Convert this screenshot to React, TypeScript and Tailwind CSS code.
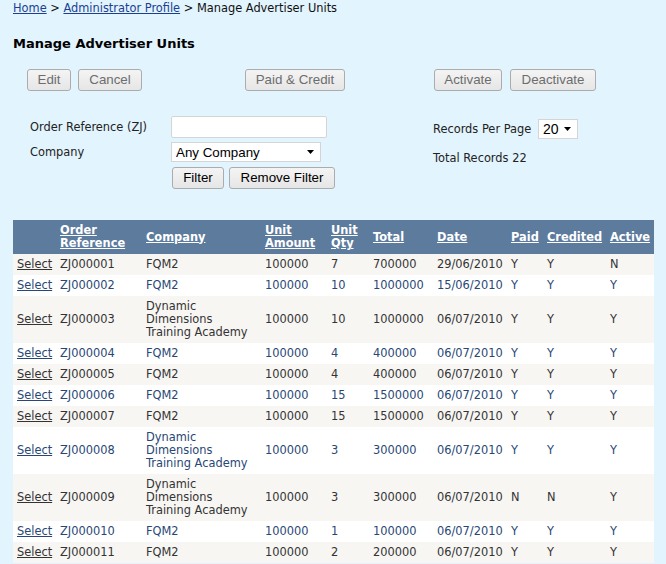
import React from 'react';

type Unit = {
  ref: string,
  company: string,
  amount: string,
  qty: string,
  total: string,
  date: string,
  paid: string,
  credited: string,
  active: string,
};

const DDTA = 'Dynamic Dimensions Training Academy';

const UNITS: Unit[] = [
  { ref: 'ZJ000001', company: 'FQM2', amount: '100000', qty: '7', total: '700000', date: '29/06/2010', paid: 'Y', credited: 'Y', active: 'N' },
  { ref: 'ZJ000002', company: 'FQM2', amount: '100000', qty: '10', total: '1000000', date: '15/06/2010', paid: 'Y', credited: 'Y', active: 'Y' },
  { ref: 'ZJ000003', company: DDTA, amount: '100000', qty: '10', total: '1000000', date: '06/07/2010', paid: 'Y', credited: 'Y', active: 'Y' },
  { ref: 'ZJ000004', company: 'FQM2', amount: '100000', qty: '4', total: '400000', date: '06/07/2010', paid: 'Y', credited: 'Y', active: 'Y' },
  { ref: 'ZJ000005', company: 'FQM2', amount: '100000', qty: '4', total: '400000', date: '06/07/2010', paid: 'Y', credited: 'Y', active: 'Y' },
  { ref: 'ZJ000006', company: 'FQM2', amount: '100000', qty: '15', total: '1500000', date: '06/07/2010', paid: 'Y', credited: 'Y', active: 'Y' },
  { ref: 'ZJ000007', company: 'FQM2', amount: '100000', qty: '15', total: '1500000', date: '06/07/2010', paid: 'Y', credited: 'Y', active: 'Y' },
  { ref: 'ZJ000008', company: DDTA, amount: '100000', qty: '3', total: '300000', date: '06/07/2010', paid: 'Y', credited: 'Y', active: 'Y' },
  { ref: 'ZJ000009', company: DDTA, amount: '100000', qty: '3', total: '300000', date: '06/07/2010', paid: 'N', credited: 'N', active: 'Y' },
  { ref: 'ZJ000010', company: 'FQM2', amount: '100000', qty: '1', total: '100000', date: '06/07/2010', paid: 'Y', credited: 'Y', active: 'Y' },
  { ref: 'ZJ000011', company: 'FQM2', amount: '100000', qty: '2', total: '200000', date: '06/07/2010', paid: 'Y', credited: 'Y', active: 'Y' },
];

// header labels, one entry per line
const HEADERS: string[][] = [
  ['Order', 'Reference'],
  ['Company'],
  ['Unit', 'Amount'],
  ['Unit', 'Qty'],
  ['Total'],
  ['Date'],
  ['Paid'],
  ['Credited'],
  ['Active'],
];

const Button = ({ children, disabled, className = '' }: { children: React.ReactNode, disabled?: boolean, className?: string }) => (
  <button
    className={`h-[22px] px-0 whitespace-nowrap border border-[#acacac] rounded-[3px] bg-gradient-to-b from-[#f4f4f4] to-[#e6e6e6] font-['Liberation_Sans',Arial,sans-serif] text-[13.33px] leading-none ${disabled ? 'text-[#6d6d6d]' : 'text-black'} ${className}`}
  >
    {children}
  </button>
);

const Arrow = () => (
  <svg width="7" height="4" viewBox="0 0 7 4" className="shrink-0">
    <path d="M0 0h7L3.5 4z" fill="#000" />
  </svg>
);

const App = () => {
  return (
    <div className="min-h-screen bg-[#e2f4fd] px-[13px] pt-[2px] font-['DejaVu_Sans',Verdana,sans-serif] text-[11.4px] leading-[13px] text-[#111]">
      <div className="whitespace-nowrap">
        <a className="text-[#1c3f94] underline">Home</a>
        <span> &gt; </span>
        <a className="text-[#1c3f94] underline">Administrator Profile</a>
        <span> &gt; </span>
        <span>Manage Advertiser Units</span>
      </div>

      <h1 className="mt-[21px] text-[13px] font-bold leading-[16px] text-black">Manage Advertiser Units</h1>

      <div className="mt-[17px] flex items-center">
        <div className="w-[232px] pl-[14px] flex gap-[7px]">
          <Button disabled className="w-[44px]">Edit</Button>
          <Button disabled className="w-[64px]">Cancel</Button>
        </div>
        <div className="w-[189px]">
          <Button disabled className="w-[100px]">Paid &amp; Credit</Button>
        </div>
        <div className="flex gap-[8px]">
          <Button disabled className="w-[68px]">Activate</Button>
          <Button disabled className="w-[86px]">Deactivate</Button>
        </div>
      </div>

      <div className="mt-[25px] flex">
        <div className="w-[420px] pl-[17px]">
          <div className="flex items-center h-[22px]">
            <span className="w-[141px] text-[#222]">Order Reference (ZJ)</span>
            <div className="w-[156px] h-[22px] bg-white border border-[#d5d5d5] rounded-[2px]" />
          </div>
          <div className="mt-[4px] flex items-center h-[20px]">
            <span className="w-[141px] text-[#222]">Company</span>
            <div className="w-[150px] h-[20px] bg-white border border-[#d5d5d5] flex items-center justify-between pl-[4px] pr-[6px] font-['Liberation_Sans',Arial,sans-serif] text-[13.33px] text-black">
              <span>Any Company</span>
              <Arrow />
            </div>
          </div>
          <div className="mt-[5px] flex gap-[5px] pl-[142px]">
            <Button className="w-[52px]">Filter</Button>
            <Button className="w-[106px]">Remove Filter</Button>
          </div>
        </div>
        <div className="pt-[3px]">
          <div className="flex items-center h-[20px]">
            <span className="w-[105px] text-[#222] whitespace-nowrap">Records Per Page</span>
            <div className="w-[40px] h-[20px] bg-white border border-[#d5d5d5] flex items-center justify-between pl-[4px] pr-[6px] font-['Liberation_Sans',Arial,sans-serif] text-[14px] text-black">
              <span>20</span>
              <Arrow />
            </div>
          </div>
          <div className="mt-[13px] text-[#222]">Total Records 22</div>
        </div>
      </div>

      <table className="mt-[31px] w-[641px] table-fixed border-collapse">
        <colgroup>
          <col className="w-[43px]" />
          <col className="w-[86px]" />
          <col className="w-[119px]" />
          <col className="w-[66px]" />
          <col className="w-[42px]" />
          <col className="w-[64px]" />
          <col className="w-[74px]" />
          <col className="w-[36px]" />
          <col className="w-[63px]" />
          <col className="w-[48px]" />
        </colgroup>
        <thead>
          <tr className="bg-[#5d7b9d] text-white font-bold text-left h-[34px]">
            <th className="px-[4px]"></th>
            {HEADERS.map(lines => (
              <th key={lines.join(' ')} className="px-[4px] py-[4px] leading-[13px] font-bold whitespace-nowrap">
                <a className="underline">
                  {lines.map((l, i) => (
                    <React.Fragment key={l}>
                      {i > 0 && <br />}
                      {l}
                    </React.Fragment>
                  ))}
                </a>
              </th>
            ))}
          </tr>
        </thead>
        <tbody>
          {UNITS.map((u, i) => {
            const odd = i % 2 === 0;
            return (
              <tr key={u.ref} className={odd ? 'bg-[#f7f6f3] text-[#333333]' : 'bg-white text-[#284775]'}>
                <td className="px-[4px] py-[4px]"><a className="underline">Select</a></td>
                <td className="px-[4px] py-[4px]">{u.ref}</td>
                <td className="px-[4px] py-[4px]">{u.company}</td>
                <td className="px-[4px] py-[4px]">{u.amount}</td>
                <td className="px-[4px] py-[4px]">{u.qty}</td>
                <td className="px-[4px] py-[4px]">{u.total}</td>
                <td className="px-[4px] py-[4px]">{u.date}</td>
                <td className="px-[4px] py-[4px]">{u.paid}</td>
                <td className="px-[4px] py-[4px]">{u.credited}</td>
                <td className="px-[4px] py-[4px]">{u.active}</td>
              </tr>
            );
          })}
        </tbody>
      </table>
    </div>
  );
};

export default App;
